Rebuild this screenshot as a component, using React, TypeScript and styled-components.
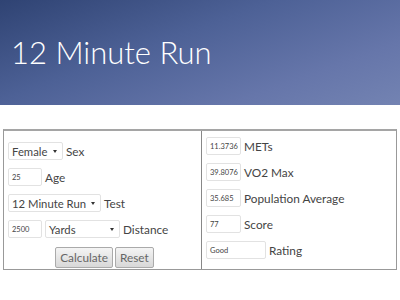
import React from "react";
import styled, { createGlobalStyle } from "styled-components";

const Global = createGlobalStyle`
  html, body { margin: 0; padding: 0; background: #fff; }
  body { font-family: "Lato", "Open Sans", sans-serif; color: #333; }
`;

const Header = styled.header`
  height: 105px;
  background: linear-gradient(160deg, #2f4373 0%, #4d6196 40%, #6676aa 75%, #7383b2 100%);
  display: flex;
  align-items: center;
  padding: 0 11px;
  box-sizing: border-box;
`;

const Title = styled.h1`
  margin: 0;
  font-family: "Lato", sans-serif;
  font-weight: 300;
  font-size: 31px;
  color: #fff;
  padding-bottom: 2px;
`;

const Panel = styled.div`
  margin: 24px 3px 0 3px;
  border: 1px solid #999;
  border-top: 2px solid #a5a5a5;
  display: grid;
  grid-template-columns: 197px 1fr;
  height: 141px;
  box-sizing: border-box;
`;

const Cell = styled.div<{ $right?: boolean }>`
  display: flex;
  flex-direction: column;
  gap: 8px;
  padding: ${(p) => (p.$right ? "6px 0 0 4px" : "11px 0 0 4px")};
  border-left: ${(p) => (p.$right ? "1px solid #888" : "none")};
`;

const Row = styled.div`
  display: flex;
  align-items: center;
  gap: 3px;
  height: 18px;
`;

const Label = styled.span`
  font-size: 11.8px;
  color: #444;
  white-space: nowrap;
`;

const Select = styled.div<{ $w: number }>`
  width: ${(p) => p.$w}px;
  height: 18px;
  box-sizing: border-box;
  border: 1px solid #e2e2e2;
  border-radius: 2px;
  background: #fff;
  display: flex;
  align-items: center;
  justify-content: space-between;
  padding: 0 5px 0 3px;
  font-size: 11.3px;
  color: #444;
  white-space: nowrap;
`;

const Caret = styled.span`
  width: 0;
  height: 0;
  border-left: 2.5px solid transparent;
  border-right: 2.5px solid transparent;
  border-top: 3px solid #333;
`;

const Input = styled.div<{ $w: number }>`
  width: ${(p) => p.$w}px;
  height: 18px;
  box-sizing: border-box;
  border: 1px solid #e2e2e2;
  border-radius: 2px;
  background: #fff;
  display: flex;
  align-items: center;
  padding: 0 3px;
  font-size: 7.5px;
  color: #444;
  white-space: nowrap;
`;

const Buttons = styled.div`
  display: flex;
  justify-content: center;
  gap: 2px;
  margin-top: 1px;
`;

const Button = styled.div`
  height: 21px;
  box-sizing: border-box;
  padding: 0 4px;
  border: 1px solid #aaa;
  border-radius: 2px;
  background: linear-gradient(#f4f4f4, #d8d8d8);
  display: flex;
  align-items: center;
  font-size: 11.8px;
  color: #666;
`;

export default function App() {
  return (
    <>
      <Global />
      <Header>
        <Title>12 Minute Run</Title>
      </Header>
      <Panel>
        <Cell>
          <Row>
            <Select $w={55}>Female<Caret /></Select>
            <Label>Sex</Label>
          </Row>
          <Row>
            <Input $w={34}>25</Input>
            <Label>Age</Label>
          </Row>
          <Row>
            <Select $w={93}>12 Minute Run<Caret /></Select>
            <Label>Test</Label>
          </Row>
          <Row>
            <Input $w={34}>2500</Input>
            <Select $w={75}>Yards<Caret /></Select>
            <Label>Distance</Label>
          </Row>
          <Buttons>
            <Button>Calculate</Button>
            <Button>Reset</Button>
          </Buttons>
        </Cell>
        <Cell $right>
          <Row>
            <Input $w={35}>11.3736</Input>
            <Label>METs</Label>
          </Row>
          <Row>
            <Input $w={35}>39.8076</Input>
            <Label>VO2 Max</Label>
          </Row>
          <Row>
            <Input $w={35}>35.685</Input>
            <Label>Population Average</Label>
          </Row>
          <Row>
            <Input $w={35}>77</Input>
            <Label>Score</Label>
          </Row>
          <Row>
            <Input $w={60}>Good</Input>
            <Label>Rating</Label>
          </Row>
        </Cell>
      </Panel>
    </>
  );
}
